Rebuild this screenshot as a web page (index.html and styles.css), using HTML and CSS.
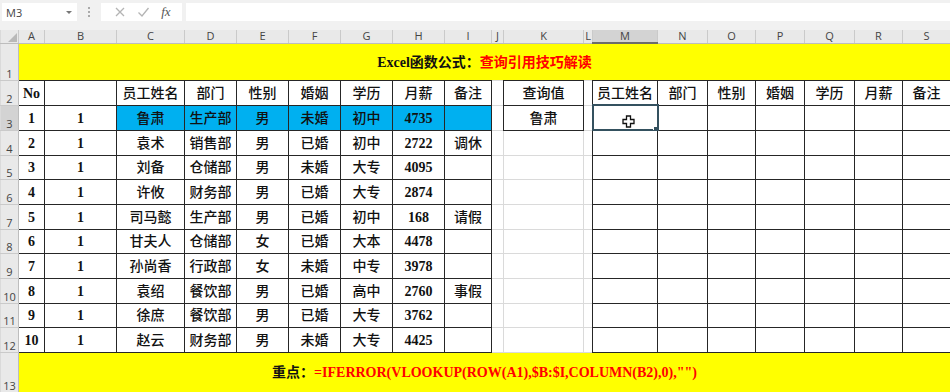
FILE: index.html
```html
<!DOCTYPE html>
<html lang="zh">
<head>
  <meta charset="UTF-8" />
  <title>Excel函数公式：查询引用技巧解读</title>
  <link rel="stylesheet" href="styles.css">
</head>
<body>

  <div class="toolbar">
    <div class="namebox">
      <span>M3</span>
      <span class="caret"></span>
    </div>
    <div class="grip"><i></i><i></i><i></i></div>
    <div class="fxbox">
      <svg class="tb-icon" width="12" height="12" viewBox="0 0 12 12"><path d="M2 2l8 8M10 2l-8 8" stroke="#b4b4b4" stroke-width="1.3" fill="none"/></svg>
      <svg class="tb-icon" width="13" height="12" viewBox="0 0 13 12"><path d="M1.5 6.5l3.5 3.5 6.5-8" stroke="#b4b4b4" stroke-width="1.3" fill="none"/></svg>
      <span class="fx">fx</span>
    </div>
    <div class="formula"></div>
  </div>

  <table class="sheet">
    <colgroup>
      <col class="c-rh"><col class="c-a"><col class="c-b"><col class="c-c"><col class="c-d"><col class="c-e"><col class="c-f"><col class="c-g"><col class="c-h"><col class="c-i"><col class="c-j"><col class="c-k"><col class="c-l"><col class="c-m"><col class="c-n"><col class="c-o"><col class="c-p"><col class="c-q"><col class="c-r"><col class="c-s">
    </colgroup>
    <tr class="colhead">
      <th class="corner"><svg width="9" height="9" viewBox="0 0 9 9"><path d="M9 0V9H0z" fill="#b9b9b9"/></svg></th>
      <th>A</th><th>B</th><th>C</th><th>D</th><th>E</th><th>F</th><th>G</th><th>H</th><th>I</th><th>J</th><th>K</th><th>L</th><th class="on">M</th><th>N</th><th>O</th><th>P</th><th>Q</th><th>R</th><th>S</th>
    </tr>
    <tr class="r-title">
      <th class="rn">1</th>
      <td class="banner" colspan="19">Excel函数公式：<span class="red">查询引用技巧解读</span></td>
    </tr>
    <tr class="r25">
      <th class="rn">2</th>
      <td class="b n">No</td><td class="b"></td><td class="b">员工姓名</td><td class="b">部门</td><td class="b">性别</td><td class="b">婚姻</td><td class="b">学历</td><td class="b">月薪</td><td class="b">备注</td>
      <td></td><td class="b">查询值</td><td></td>
      <td class="b">员工姓名</td><td class="b">部门</td><td class="b">性别</td><td class="b">婚姻</td><td class="b">学历</td><td class="b">月薪</td><td class="b">备注</td>
    </tr>
    <tr class="r25">
      <th class="rn on">3</th>
      <td class="b n">1</td><td class="b n">1</td><td class="b sel">鲁肃</td><td class="b sel">生产部</td><td class="b sel">男</td><td class="b sel">未婚</td><td class="b sel">初中</td><td class="b sel n">4735</td><td class="b sel"></td>
      <td></td><td class="b">鲁肃</td><td></td>
      <td class="b active">
        <svg class="cursor" width="13" height="13" viewBox="0 0 13 13"><path d="M4.5 1h4v3.5H12v4H8.5V12h-4V8.5H1v-4h3.5z" fill="#fff" stroke="#111" stroke-width="1.3"/></svg>
      </td><td class="b"></td><td class="b"></td><td class="b"></td><td class="b"></td><td class="b"></td><td class="b"></td>
    </tr>
    <tr class="r25">
      <th class="rn">4</th>
      <td class="b n">2</td><td class="b n">1</td><td class="b">袁术</td><td class="b">销售部</td><td class="b">男</td><td class="b">已婚</td><td class="b">初中</td><td class="b n">2722</td><td class="b">调休</td>
      <td></td><td></td><td></td>
      <td class="b"></td><td class="b"></td><td class="b"></td><td class="b"></td><td class="b"></td><td class="b"></td><td class="b"></td>
    </tr>
    <tr class="r24">
      <th class="rn">5</th>
      <td class="b n">3</td><td class="b n">1</td><td class="b">刘备</td><td class="b">仓储部</td><td class="b">男</td><td class="b">未婚</td><td class="b">大专</td><td class="b n">4095</td><td class="b"></td>
      <td></td><td></td><td></td>
      <td class="b"></td><td class="b"></td><td class="b"></td><td class="b"></td><td class="b"></td><td class="b"></td><td class="b"></td>
    </tr>
    <tr class="r25">
      <th class="rn">6</th>
      <td class="b n">4</td><td class="b n">1</td><td class="b">许攸</td><td class="b">财务部</td><td class="b">男</td><td class="b">已婚</td><td class="b">大专</td><td class="b n">2874</td><td class="b"></td>
      <td></td><td></td><td></td>
      <td class="b"></td><td class="b"></td><td class="b"></td><td class="b"></td><td class="b"></td><td class="b"></td><td class="b"></td>
    </tr>
    <tr class="r25">
      <th class="rn">7</th>
      <td class="b n">5</td><td class="b n">1</td><td class="b">司马懿</td><td class="b">生产部</td><td class="b">男</td><td class="b">已婚</td><td class="b">初中</td><td class="b n">168</td><td class="b">请假</td>
      <td></td><td></td><td></td>
      <td class="b"></td><td class="b"></td><td class="b"></td><td class="b"></td><td class="b"></td><td class="b"></td><td class="b"></td>
    </tr>
    <tr class="r24">
      <th class="rn">8</th>
      <td class="b n">6</td><td class="b n">1</td><td class="b">甘夫人</td><td class="b">仓储部</td><td class="b">女</td><td class="b">已婚</td><td class="b">大本</td><td class="b n">4478</td><td class="b"></td>
      <td></td><td></td><td></td>
      <td class="b"></td><td class="b"></td><td class="b"></td><td class="b"></td><td class="b"></td><td class="b"></td><td class="b"></td>
    </tr>
    <tr class="r25">
      <th class="rn">9</th>
      <td class="b n">7</td><td class="b n">1</td><td class="b">孙尚香</td><td class="b">行政部</td><td class="b">女</td><td class="b">未婚</td><td class="b">中专</td><td class="b n">3978</td><td class="b"></td>
      <td></td><td></td><td></td>
      <td class="b"></td><td class="b"></td><td class="b"></td><td class="b"></td><td class="b"></td><td class="b"></td><td class="b"></td>
    </tr>
    <tr class="r25">
      <th class="rn">10</th>
      <td class="b n">8</td><td class="b n">1</td><td class="b">袁绍</td><td class="b">餐饮部</td><td class="b">男</td><td class="b">已婚</td><td class="b">高中</td><td class="b n">2760</td><td class="b">事假</td>
      <td></td><td></td><td></td>
      <td class="b"></td><td class="b"></td><td class="b"></td><td class="b"></td><td class="b"></td><td class="b"></td><td class="b"></td>
    </tr>
    <tr class="r24">
      <th class="rn">11</th>
      <td class="b n">9</td><td class="b n">1</td><td class="b">徐庶</td><td class="b">餐饮部</td><td class="b">男</td><td class="b">已婚</td><td class="b">大专</td><td class="b n">3762</td><td class="b"></td>
      <td></td><td></td><td></td>
      <td class="b"></td><td class="b"></td><td class="b"></td><td class="b"></td><td class="b"></td><td class="b"></td><td class="b"></td>
    </tr>
    <tr class="r25">
      <th class="rn">12</th>
      <td class="b n">10</td><td class="b n">1</td><td class="b">赵云</td><td class="b">财务部</td><td class="b">男</td><td class="b">未婚</td><td class="b">大专</td><td class="b n">4425</td><td class="b"></td>
      <td></td><td></td><td></td>
      <td class="b"></td><td class="b"></td><td class="b"></td><td class="b"></td><td class="b"></td><td class="b"></td><td class="b"></td>
    </tr>
    <tr class="r-foot">
      <th class="rn">13</th>
      <td class="banner" colspan="19">重点：<span class="red">=IFERROR(VLOOKUP(ROW(A1),$B:$I,COLUMN(B2),0),"")</span></td>
    </tr>
  </table>

</body>
</html>
```

FILE: styles.css
```css
* { box-sizing: border-box; }

body {
  margin: 0;
  width: 950px; height: 392px;
  overflow: hidden;
  background: #fff;
  font-family: "Liberation Serif", "Noto Sans CJK SC", serif;
  color: #111;
}

/* formula bar */
.toolbar {
  height: 30px;
  background: #f1f1f1;
  display: flex; align-items: flex-start;
  padding-top: 3px;
  font-family: "Open Sans", "Liberation Sans", sans-serif;
}

.namebox {
  width: 75px; height: 18px; margin-left: 2px;
  background: #fff;
  display: flex; align-items: center; justify-content: space-between;
  padding: 0 5px 0 4px;
  font-size: 11px; color: #444;
}
.caret {
  width: 0; height: 0;
  border-left: 3px solid transparent; border-right: 3px solid transparent;
  border-top: 3px solid #777;
}

.grip {
  width: 24px; height: 18px;
  display: flex; flex-direction: column; align-items: center; justify-content: center; gap: 2px;
}
.grip i { width: 2px; height: 2px; background: #aaa; }

.fxbox {
  width: 81px; height: 18px; margin-right: 4px;
  background: #fff;
  display: flex; align-items: center; justify-content: space-around;
  padding: 0 6px 0 8px;
}
.fx {
  font-family: "Liberation Serif", serif; font-style: italic;
  font-size: 13px; color: #555;
}

.formula { flex: 1; height: 18px; background: #fff; }

/* sheet grid */
.sheet {
  border-collapse: collapse;
  table-layout: fixed;
  width: 950px;
}
.sheet col { border-left: 1px solid #dadada; border-right: 1px solid #dadada; }
.sheet tr { border-bottom: 1px solid #dadada; }

.c-rh { width: 18px; } .c-a { width: 26px; } .c-b { width: 72px; } .c-c { width: 68px; }
.c-d { width: 52px; } .c-e { width: 52px; } .c-f { width: 52px; } .c-g { width: 52px; }
.c-h { width: 52px; } .c-i { width: 47px; } .c-j { width: 12px; } .c-k { width: 80px; }
.c-l { width: 9px; } .c-m { width: 65px; } .c-n { width: 50px; } .c-o { width: 48px; }
.c-p { width: 49px; } .c-q { width: 50px; } .c-r { width: 48px; } .c-s { width: 48px; }

.colhead th {
  height: 13px; padding: 0;
  background: #e9e9e9;
  border-right: 1px solid #cacaca; border-bottom: 1px solid #bdbdbd;
  font: 400 11px/12px "Open Sans", "Liberation Sans", sans-serif;
  color: #444;
}
.colhead th.on { background: #d3d3d3; border-bottom: 2px solid #6b6b6b; }
.colhead th.corner { text-align: right; vertical-align: bottom; padding: 0 1px 1px 0; }
.corner svg { display: block; margin-left: auto; }

.rn {
  padding: 0;
  background: #e9e9e9;
  border-right: 1px solid #bdbdbd; border-bottom: 1px solid #cacaca;
  font: 400 11px/12px "Open Sans", "Liberation Sans", sans-serif;
  color: #444;
  text-align: center; vertical-align: bottom;
}
.rn.on { background: #d3d3d3; }

.r-title { height: 37px; }
.r25 { height: 25px; }
.r24 { height: 24px; }
.r-foot { height: 40px; }

.sheet td {
  padding: 2px 0 0;
  text-align: center; vertical-align: middle;
  font-size: 14px; font-weight: 500; line-height: 1;
  white-space: nowrap; overflow: hidden;
}
.sheet td.b { border: 1px solid #262626; }
.sheet td.n { font-weight: 700; }
.sheet td.sel { background: #00b0f0; }

.sheet td.banner {
  background: #ffff00;
  font-weight: 700;
  color: #111;
}
.red { color: #f00; }

/* active cell */
.sheet td.active {
  position: relative;
  outline: 2px solid #34515f; outline-offset: -1px;
}
.sheet td.active::after {
  content: "";
  position: absolute; right: -3px; bottom: -3px;
  width: 5px; height: 5px;
  background: #34515f; border: 1px solid #fff;
}
.cursor { position: absolute; left: 29px; top: 9px; }
```
